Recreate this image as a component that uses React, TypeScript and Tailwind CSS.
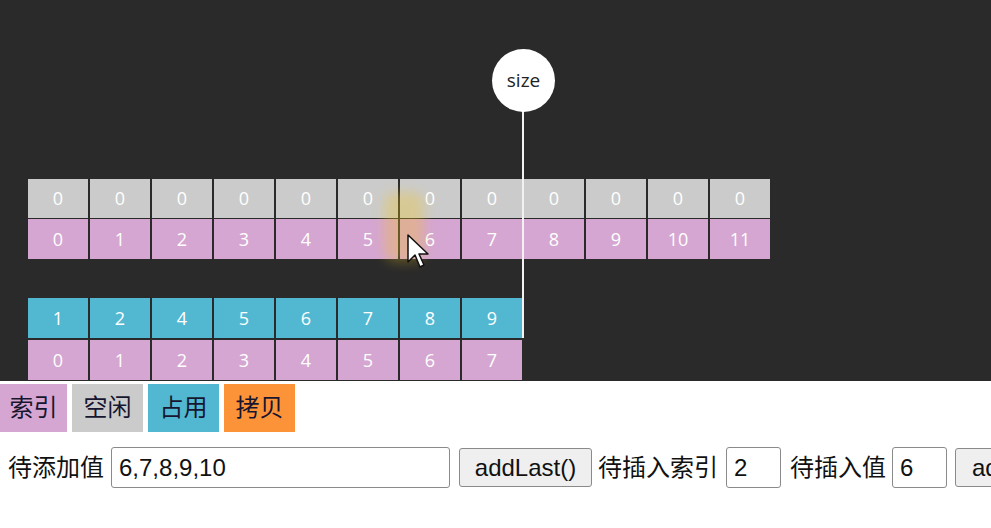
import React from "react";

const cellFont = { fontFamily: '"Open Sans", "Noto Sans", sans-serif' };
const cjk = { fontFamily: '"Liberation Sans", "Noto Sans CJK SC", sans-serif' };

function Cell({ v, color, h }: { v: number; color: string; h: string }) {
  return (
    <div
      className={`w-[60px] ${h} ${color} flex items-center justify-center text-white text-[18px]`}
      style={cellFont}
    >
      {v}
    </div>
  );
}

export default function App() {
  const cap = Array.from({ length: 12 }, (_, i) => i);
  const data = [1, 2, 4, 5, 6, 7, 8, 9];
  return (
    <div className="w-[991px] h-[528px] overflow-hidden bg-white" style={cjk}>
      <div className="relative h-[381px] bg-[#2a2a2a] pt-[179px] pl-[28px] overflow-hidden">
        <div className="flex gap-[2px]">
          {cap.map((i) => (
            <div key={i} className="flex flex-col gap-[1px]">
              <Cell v={0} color="bg-[#cbcbcb]" h="h-[39px]" />
              <Cell v={i} color="bg-[#d5a6d1]" h="h-[40px]" />
            </div>
          ))}
        </div>
        <div className="flex gap-[2px] mt-[39px]">
          {data.map((d, i) => (
            <div key={i} className="flex flex-col gap-[2px]">
              <Cell v={d} color="bg-[#52b8d1]" h="h-[40px]" />
              <Cell v={i} color="bg-[#d5a6d1]" h="h-[40px]" />
            </div>
          ))}
        </div>
        <div className="absolute left-[522px] top-[108px] w-[2px] h-[230px] bg-[#f2f2f2]" />
        <div
          className="absolute left-[492px] top-[49px] w-[63px] h-[63px] rounded-full bg-white flex items-center justify-center text-[19px] text-[#222]"
          style={cellFont}
        >
          size
        </div>
        <div className="absolute left-[384px] top-[192px] w-[40px] h-[70px] rounded-[12px] bg-[#f5c518] opacity-30 blur-[6px]" />
        <svg className="absolute left-[407px] top-[234px]" width="24" height="36" viewBox="0 0 24 36">
          <path d="M1 1 L1 28 L8 21 L13 33 L17 31 L12 20 L21 20 Z" fill="#ffffff" stroke="#111" strokeWidth="1.5" strokeLinejoin="round" />
        </svg>
      </div>
      <div className="pt-[3px]">
        <div className="flex gap-[5px] text-[24px] text-[#161630]">
          <div className="w-[67px] h-[48px] bg-[#d5a6d1] flex items-center justify-center">索引</div>
          <div className="w-[71px] h-[48px] bg-[#cbcbcb] flex items-center justify-center">空闲</div>
          <div className="w-[71px] h-[48px] bg-[#52b8d1] flex items-center justify-center">占用</div>
          <div className="w-[71px] h-[48px] bg-[#fd9339] flex items-center justify-center">拷贝</div>
        </div>
        <div className="flex items-center mt-[15px] pl-[8px] text-[24px] text-[#111] whitespace-nowrap">
          <span className="shrink-0">待添加值</span>
          <div className="shrink-0 ml-[7px] w-[339px] h-[41px] border border-[#8a8a8a] rounded-[3px] flex items-center px-[7px]">
            6,7,8,9,10
          </div>
          <div className="shrink-0 ml-[9px] w-[133px] h-[39px] border border-[#8a8a8a] rounded-[3px] bg-[#efefef] flex items-center justify-center">
            addLast()
          </div>
          <span className="shrink-0 ml-[6px]">待插入索引</span>
          <div className="shrink-0 ml-[8px] w-[55px] h-[41px] border border-[#8a8a8a] rounded-[3px] flex items-center px-[7px]">
            2
          </div>
          <span className="shrink-0 ml-[9px]">待插入值</span>
          <div className="shrink-0 ml-[6px] w-[55px] h-[41px] border border-[#8a8a8a] rounded-[3px] flex items-center px-[7px]">
            6
          </div>
          <div className="shrink-0 ml-[8px] w-[133px] h-[39px] border border-[#8a8a8a] rounded-[3px] bg-[#efefef] flex items-center px-[16px]">
            addIndex()
          </div>
        </div>
      </div>
    </div>
  );
}
